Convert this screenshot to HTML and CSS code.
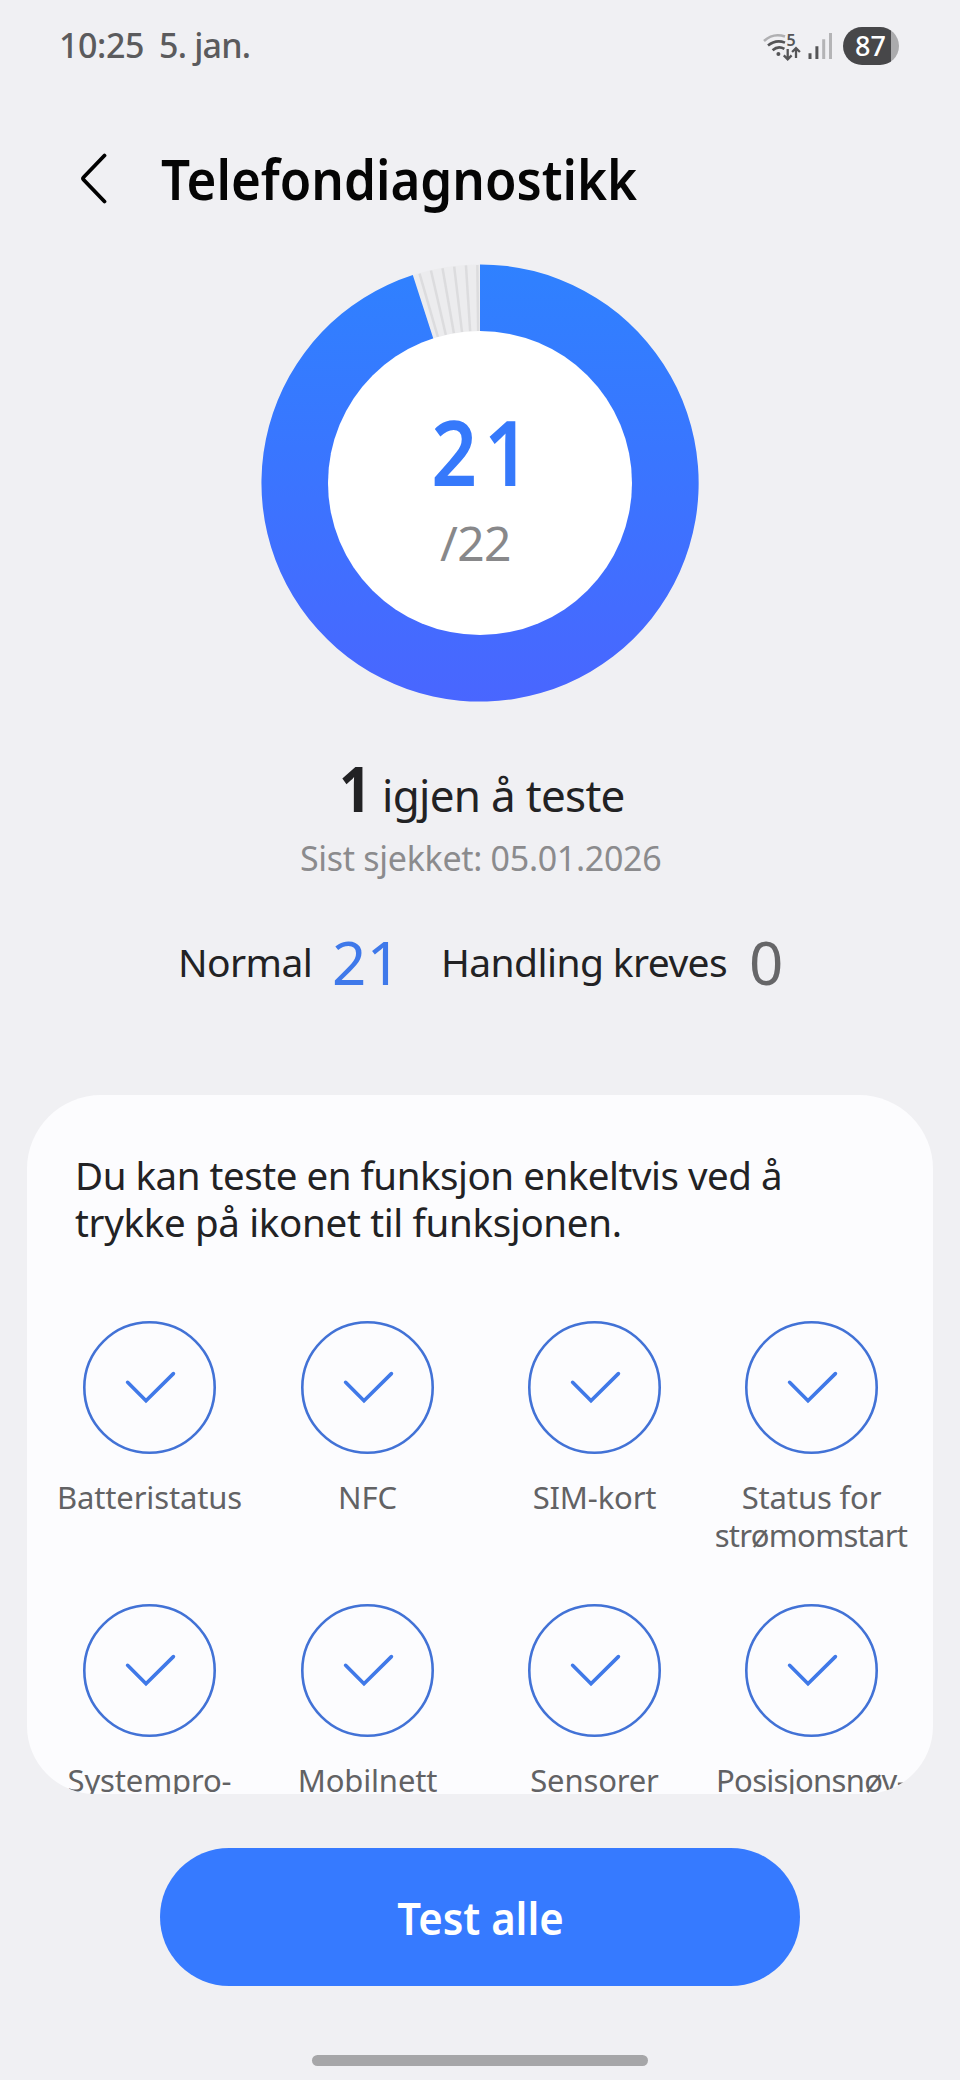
FILE: index.html
```html
<!DOCTYPE html>
<html lang="nb">
<head>
<meta charset="utf-8">
<title>Telefondiagnostikk</title>
<link rel="stylesheet" href="styles.css">
</head>
<body>
<svg class="defs" width="0" height="0" aria-hidden="true">
  <symbol id="check" viewBox="0 0 133 133">
    <circle cx="66.5" cy="66.5" r="65.2" fill="none" stroke="#4272d6" stroke-width="2.6"/>
    <path d="M44.6 61.3 63 79.7 90.4 52.6" fill="none" stroke="#4079e8" stroke-width="3.6" stroke-linecap="round"/>
  </symbol>
</svg>
<main class="screen">
  <div class="status">
    <span class="clock">10:25</span>
    <span class="date">5. jan.</span>
    <svg class="wifi" width="44" height="34" viewBox="0 0 44 34" fill="none" stroke-width="2.6">
      <path d="M3 11C9 5.6 17 4.2 24 6.6" stroke="#b0b0b2"/>
      <path d="M7 15.600C12 11.300 18 10.300 24 12.600" stroke="#555557"/>
      <path d="M11.600 20.200C15 17.100 19.500 16.600 23.400 18.800" stroke="#555557"/>
      <circle cx="17.400" cy="24" r="2" fill="#555557"/>
      <text class="band" x="25.500" y="15.500">5</text>
      <path d="M26.700 19v10M22.800 25.400l3.900 3.900 3.900-3.900M35 28V18M31.100 22l3.900-3.900L38.900 22" stroke="#555557" stroke-width="2.300"/>
    </svg>
    <svg class="bars" width="26" height="34" viewBox="0 0 26 34">
      <path d="M.5 23.300h3V29h-3zM7.400 16.300h3V29h-3z" fill="#555557"/>
      <path d="M14.200 9.300h3V29h-3zM21 3h3v26h-3z" fill="#b4b4b6"/>
    </svg>
    <div class="battery"><span>87</span></div>
  </div>

  <header class="header">
    <svg class="back" width="28" height="52" viewBox="0 0 28 52"><path d="M24.500 3.500 3.600 25.200Q2.400 26.500 3.600 27.800L24.500 49.500" fill="none" stroke="#000" stroke-width="3.800" stroke-linecap="round"/></svg>
    <h1 class="title">Telefondiagnostikk</h1>
  </header>

  <section class="ring">
    <svg class="chart" width="440" height="440" viewBox="-220 -220 440 440">
      <defs>
        <linearGradient id="blue" gradientUnits="userSpaceOnUse" x1="0" y1="-219" x2="0" y2="219">
          <stop offset="0" stop-color="#2f81ff"/>
          <stop offset=".5" stop-color="#3b74ff"/>
          <stop offset="1" stop-color="#4966ff"/>
        </linearGradient>
      </defs>
      <circle r="218.500" fill="#ececee"/>
      <g stroke="#dcdcde" stroke-width="2.500">
        <path d="M0-152V-218" transform="rotate(-.7)"/>
        <path d="M0-152V-218" transform="rotate(-3.700)"/>
        <path d="M0-152V-218" transform="rotate(-6.800)"/>
        <path d="M0-152V-218" transform="rotate(-9.900)"/>
        <path d="M0-152V-218" transform="rotate(-13)"/>
        <path d="M0-152V-218" transform="rotate(-16.100)"/>
      </g>
      <path d="M0 0V-218.600A218.600 218.600 0 1 1 -67.200-208Z" fill="url(#blue)"/>
      <circle r="152" fill="#fff"/>
    </svg>
    <div class="score">
      <div class="done">21</div>
      <div class="total">/22</div>
    </div>
  </section>

  <div class="left"><b class="left-count">1</b><span class="left-text">igjen å teste</span></div>
  <div class="checked">Sist sjekket: 05.01.2026</div>

  <div class="stats">
    <span class="stat-name">Normal</span><span class="stat-num normal">21</span>
    <span class="stat-name">Handling kreves</span><span class="stat-num">0</span>
  </div>

  <section class="card">
    <p class="intro">Du kan teste en funksjon enkeltvis ved å<br><span class="intro-end">trykke på ikonet til funksjonen.</span></p>
    <div class="tests">
      <div class="test"><svg class="icon"><use href="#check"/></svg><span>Batteristatus</span></div>
      <div class="test"><svg class="icon"><use href="#check"/></svg><span>NFC</span></div>
      <div class="test"><svg class="icon"><use href="#check"/></svg><span>SIM-kort</span></div>
      <div class="test"><svg class="icon"><use href="#check"/></svg><span>Status for</span><span class="tight">strømomstart</span></div>
      <div class="test"><svg class="icon"><use href="#check"/></svg><span>Systempro-</span></div>
      <div class="test"><svg class="icon"><use href="#check"/></svg><span>Mobilnett</span></div>
      <div class="test"><svg class="icon"><use href="#check"/></svg><span>Sensorer</span></div>
      <div class="test"><svg class="icon"><use href="#check"/></svg><span class="tight">Posisjonsnøv-</span></div>
    </div>
  </section>

  <button class="run" type="button"><span>Test alle</span></button>
  <div class="handle"></div>
</main>
</body>
</html>
```

FILE: styles.css
```css
* { box-sizing: border-box; }
body { margin: 0; background: #f0f0f3; font-family: "Noto Sans", "Open Sans", sans-serif; color: #222224; }
.defs { display: block; }
.screen { width: 960px; height: 2080px; overflow: hidden; display: flex; flex-direction: column; white-space: nowrap; }

.status { height: 89px; padding: 0 61px 0 59px; display: flex; align-items: center; font-size: 34px; font-weight: 500; color: #5b5b5d; }
.clock { width: 100px; letter-spacing: -.4px; }
.date { letter-spacing: -.8px; }
.wifi { margin: 5px 3px 0 auto; }
.band { font-size: 16px; font-weight: 600; fill: #555557; }
.bars { margin: 5px 9px 0 0; }
.battery { width: 56px; height: 38px; margin-top: 3px; border-radius: 19px; background: linear-gradient(90deg, #474749 48px, #ababad 48px); color: #fff; font-size: 27px; font-weight: 500; line-height: 37px; padding-left: 12px; }

.header { height: 90px; margin-top: 44px; padding-left: 80px; display: flex; align-items: center; color: #050505; }
.title { margin: 0 0 0 53px; font-size: 56px; font-weight: 600; line-height: 90px; transform: scaleX(.913); transform-origin: 0 50%; }

.ring { height: 440px; margin-top: 40px; display: grid; justify-items: center; }
.chart, .score { grid-area: 1 / 1; }
.score { padding: 138px 9px 0 0; text-align: center; }
.done { font-size: 91px; line-height: 100px; font-weight: 600; color: #3679fb; letter-spacing: 8px; transform: translateX(9px) scaleX(.88); }
.total { font-size: 48px; line-height: 84px; color: #88888a; letter-spacing: -.6px; }

.left { height: 60px; margin-top: 55px; padding-left: 339px; display: flex; align-items: baseline; line-height: 60px; }
.left-count { width: 43px; font-size: 63px; transform: scaleX(.9); transform-origin: 0 50%; }
.left-text { font-size: 44px; letter-spacing: -.7px; }
.checked { margin: 20px 0 0 300px; font-size: 34px; line-height: 40px; letter-spacing: -.3px; color: #8b8b8d; }

.stats { height: 60px; margin-top: 53px; padding-left: 178px; display: grid; grid-template-columns: 154px 109px 308px auto; align-items: center; }
.stat-name { font-size: 39px; line-height: 60px; letter-spacing: -.6px; padding-top: 1px; }
.stat-num { font-size: 60px; line-height: 60px; color: #666668; }
.normal { color: #3f79ea; letter-spacing: .5px; }

.card { height: 699px; flex: none; margin: 104px 27px 0; padding-top: 57px; border-radius: 74px 74px 68px 68px; overflow: hidden; background: #fcfcfe; }
.intro { margin: 0 0 75px 48px; font-size: 38.5px; line-height: 47px; letter-spacing: -.47px; }
.intro-end { letter-spacing: -.33px; }
.tests { padding-left: 13px; display: grid; grid-template-columns: 218px 218px 236px 198px; grid-auto-rows: 232.700px; row-gap: 50px; }
.test { display: flex; flex-direction: column; align-items: center; font-size: 31px; line-height: 37.5px; letter-spacing: -.15px; color: #626264; }
.icon { width: 133px; height: 133px; margin-bottom: 25px; flex: none; }
.test span { margin-left: 1px; }
.test .tight { margin-left: 0; letter-spacing: -.7px; }

.run { width: 640px; height: 138px; flex: none; margin: 54px auto 0; border: 0; border-radius: 69px; background: #367aff; color: #fff; font: 600 45px/138px "Noto Sans", sans-serif; }
.run span { display: inline-block; transform: translateX(1px) scaleX(.93); }
.handle { width: 336px; height: 11px; margin: 69px auto 0; border-radius: 5.5px; background: #a6a6a8; }
```
